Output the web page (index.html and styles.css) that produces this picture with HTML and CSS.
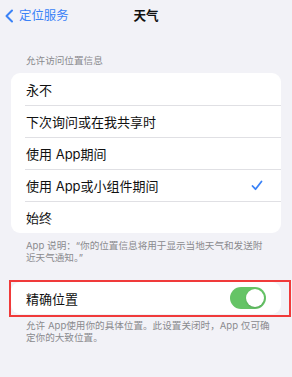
FILE: index.html
```html
<!DOCTYPE html>
<html lang="zh-CN">
<head>
<meta charset="utf-8">
<title>天气</title>
<link rel="stylesheet" href="styles.css">
</head>
<body>
<div class="screen">
  <nav class="nav">
    <a class="back">
      <svg class="chevron" width="10" height="14" viewBox="0 0 10 14"><path d="M8 1.5 L2.5 7 L8 12.5" fill="none" stroke="#3a82f7" stroke-width="2" stroke-linecap="round" stroke-linejoin="round"/></svg>
      <span>定位服务</span>
    </a>
    <h1 class="title">天气</h1>
  </nav>

  <section class="group">
    <div class="header">允许访问位置信息</div>
    <ul class="card">
      <li class="row">永不</li>
      <li class="row">下次询问或在我共享时</li>
      <li class="row">使用 App期间</li>
      <li class="row">使用 App或小组件期间
        <svg class="check" width="12" height="11" viewBox="0 0 12 11"><path d="M1.5 6 L4.5 9.2 L10.5 1.5" fill="none" stroke="#3a82f7" stroke-width="1.8" stroke-linecap="round" stroke-linejoin="round"/></svg>
      </li>
      <li class="row">始终</li>
    </ul>
    <p class="footer">App 说明：“你的位置信息将用于显示当地天气和发送附近天气通知。”</p>
  </section>

  <section class="group precise">
    <div class="highlight">
      <div class="card">
        <div class="row">精确位置
          <span class="toggle"><span class="knob"></span></span>
        </div>
      </div>
    </div>
    <p class="footer footer-wide">允许 App使用你的具体位置。此设置关闭时，App 仅可确定你的大致位置。</p>
  </section>
</div>
</body>
</html>
```

FILE: styles.css
```css
* { box-sizing: border-box; }
html, body {
  margin: 0;
  padding: 0;
  background: #f2f2f7;
}
body {
  width: 292px;
  height: 377px;
  overflow: hidden;
  font-family: "Inter", "Noto Sans CJK SC", sans-serif;
  color: #111;
}
.screen {
  display: flex;
  flex-direction: column;
}
.nav {
  position: relative;
  height: 32px;
  display: flex;
  align-items: center;
  justify-content: center;
}
.back {
  position: absolute;
  left: 4px;
  top: 9px;
  display: flex;
  align-items: center;
  gap: 5px;
  color: #3a82f7;
  font-size: 12.4px;
  line-height: 14px;
}
.chevron { display: block; }
.title {
  margin: 0;
  font-size: 12.6px;
  font-weight: 700;
  line-height: 14px;
  margin-top: -1px;
}
.group {
  display: flex;
  flex-direction: column;
}
.header {
  margin: 23px 0 6px 26px;
  font-size: 9.6px;
  line-height: 12px;
  color: #8a8a8e;
}
.card {
  list-style: none;
  margin: 0 11px;
  padding: 0;
  background: #fff;
  border-radius: 9px;
  width: 270px;
}
.row {
  position: relative;
  height: 32px;
  display: flex;
  align-items: center;
  justify-content: space-between;
  padding: 0 15px;
  font-size: 13px;
  color: #111;
}
.card li.row + li.row::before {
  content: "";
  position: absolute;
  left: 14px;
  right: 0;
  top: 0;
  height: 1px;
  background: #e0e0e4;
}
.check {
  margin-right: 3px;
}
.footer {
  margin: 7px 0 0 26px;
  width: 242px;
  font-size: 9.6px;
  line-height: 11.5px;
  color: #8a8a8e;
}
.footer-wide {
  width: 252px;
}
.precise {
  margin-top: 17px;
}
.highlight {
  margin-left: 9px;
  width: 282px;
  border: 2px solid #f03a3a;
  padding: 0 8px 1px 0;
}
.highlight .card {
  margin: 0;
}
.precise .footer {
  margin-top: 3px;
}
.toggle {
  position: relative;
  width: 36px;
  height: 22px;
  border-radius: 11px;
  background: #65c466;
  display: block;
}
.knob {
  position: absolute;
  right: 2px;
  top: 2px;
  width: 18px;
  height: 18px;
  border-radius: 50%;
  background: #fff;
  box-shadow: 0 1px 2px rgba(0,0,0,0.15);
}
```
